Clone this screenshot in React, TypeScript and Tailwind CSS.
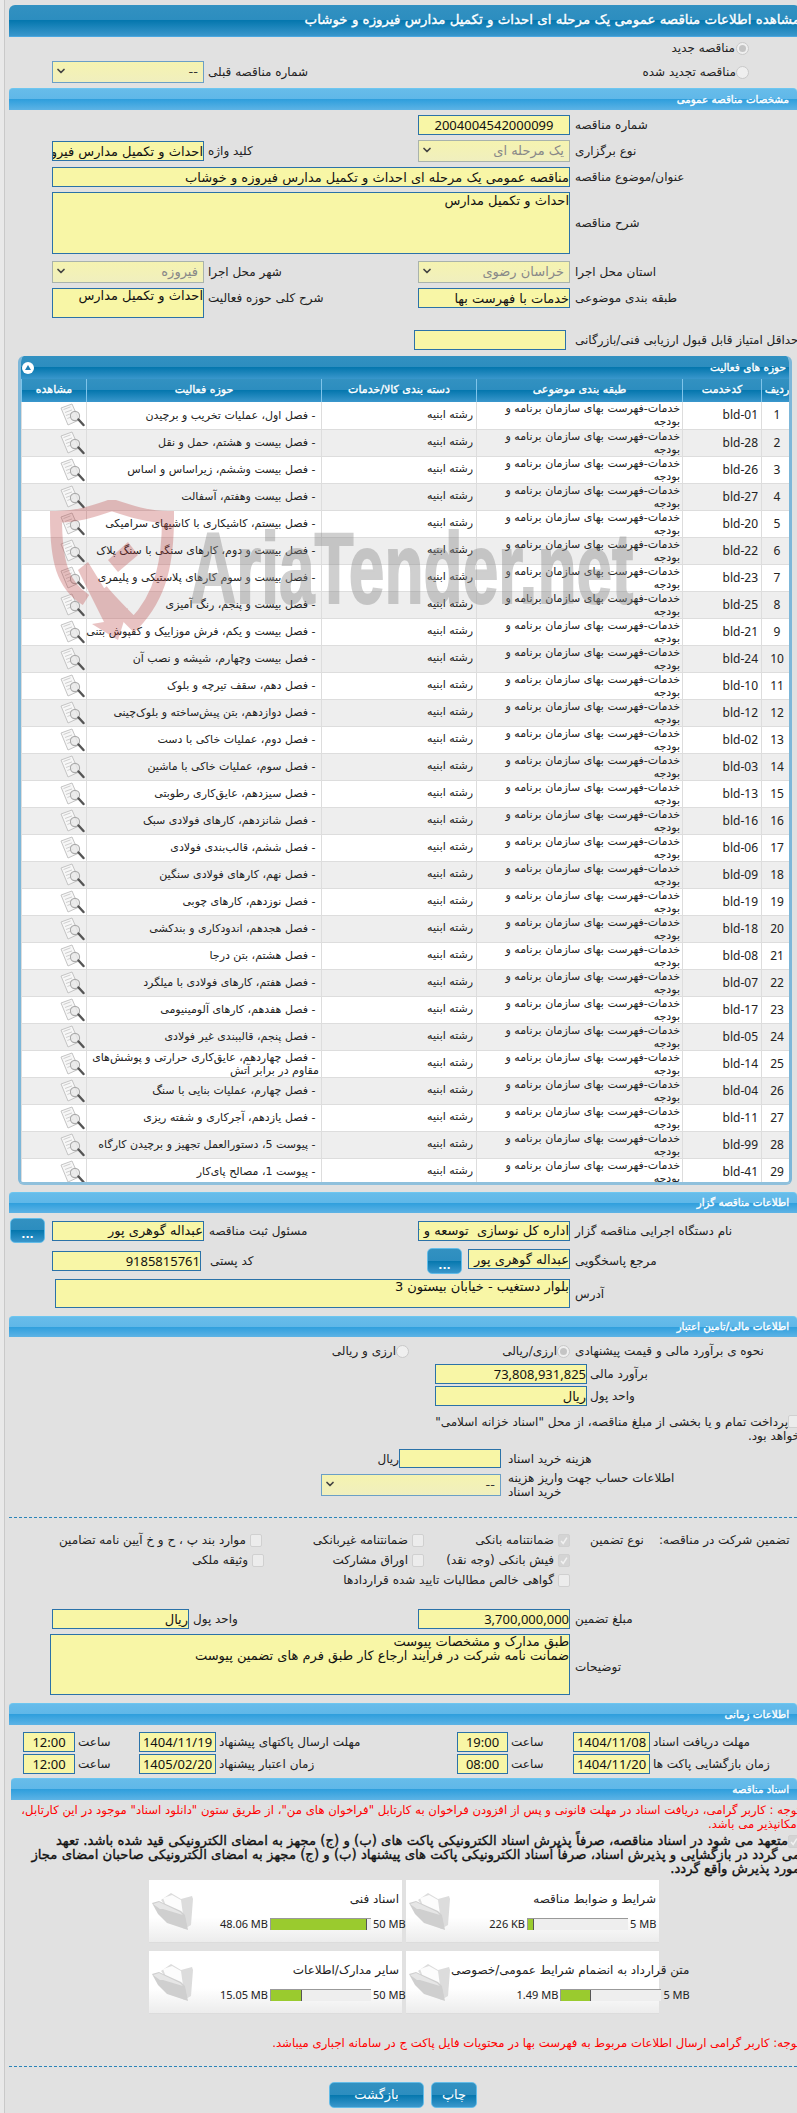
import React from 'react';
import { ChevronDown } from 'lucide-react';

const activities: [string, string][] = [
    ['bld-01', 'فصل اول، عملیات تخریب و برچیدن'],
    ['bld-28', 'فصل بیست و هشتم، حمل و نقل'],
    ['bld-26', 'فصل بیست وششم، زیراساس و اساس'],
    ['bld-27', 'فصل بیست وهفتم، آسفالت'],
    ['bld-20', 'فصل بیستم، کاشیکاری با کاشیهای سرامیکی'],
    ['bld-22', 'فصل بیست و دوم، کارهای سنگی با سنگ پلاک'],
    ['bld-23', 'فصل بیست و سوم کارهای پلاستیکی و پلیمری'],
    ['bld-25', 'فصل بیست و پنجم، رنگ آمیزی'],
    ['bld-21', 'فصل بیست و یکم، فرش موزاییک و کفپوش بتنی'],
    ['bld-24', 'فصل بیست وچهارم، شیشه و نصب آن'],
    ['bld-10', 'فصل دهم، سقف تیرچه و بلوک'],
    ['bld-12', 'فصل دوازدهم، بتن پیش‌ساخته و بلوک‌چینی'],
    ['bld-02', 'فصل دوم، عملیات خاکی با دست'],
    ['bld-03', 'فصل سوم، عملیات خاکی با ماشین'],
    ['bld-13', 'فصل سیزدهم، عایق‌کاری رطوبتی'],
    ['bld-16', 'فصل شانزدهم، کارهای فولادی سبک'],
    ['bld-06', 'فصل ششم، قالب‌بندی فولادی'],
    ['bld-09', 'فصل نهم، کارهای فولادی سنگین'],
    ['bld-19', 'فصل نوزدهم، کارهای چوبی'],
    ['bld-18', 'فصل هجدهم، اندودکاری و بندکشی'],
    ['bld-08', 'فصل هشتم، بتن درجا'],
    ['bld-07', 'فصل هفتم، کارهای فولادی با میلگرد'],
    ['bld-17', 'فصل هفدهم، کارهای آلومینیومی'],
    ['bld-05', 'فصل پنجم، قالببندی غیر فولادی'],
    ['bld-14', 'فصل چهاردهم، عایق‌کاری حرارتی و پوشش‌های مقاوم در برابر آتش'],
    ['bld-04', 'فصل چهارم، عملیات بنایی با سنگ'],
    ['bld-11', 'فصل یازدهم، آجرکاری و شفته ریزی'],
    ['bld-99', 'پیوست 5، دستورالعمل تجهیز و برچیدن کارگاه'],
    ['bld-41', 'پیوست 1، مصالح پای‌کار'],
];

const darkBar = 'bg-[linear-gradient(#3291c1_0%,#2c8dbf_50%,#0577ae_50%,#3a97cc_100%)]';
const lightBar = 'bg-[linear-gradient(#67bcea_0%,#5fb7e8_50%,#2f9fdd_50%,#5db3e5_100%)]';
const latin = "font-['Noto_Sans','DejaVu_Sans',sans-serif]";
const heavy = '[-webkit-text-stroke:0.35px_currentColor]';
const inputCls = 'block shrink-0 border border-[#2b72a8] bg-[#f8f6a6] text-[13px] text-[#111] outline-none resize-none px-0 leading-[14px] text-right';

const SectionBar = ({ title, className = '' }: { title: string; className?: string }) => (
    <div dir="rtl" className={`h-[22px] ml-[9px] rounded-t-[4px] border-t border-[#6cc6f0] ${lightBar} flex items-center pr-2 text-[10.3px] text-white ${heavy} ${className}`}>
        {title}
    </div>
);

const Label = ({ children, className = '' }: { children: React.ReactNode; className?: string }) => (
    <label dir="rtl" className={`block shrink-0 text-left text-[12px] text-[#222] whitespace-nowrap ${className}`}>{children}</label>
);

const Field = ({ value, className = '' }: { value?: string; className?: string }) => (
    <input readOnly dir="rtl" value={value ?? ''} className={`${inputCls} h-[20px] ${className}`} />
);

const Area = ({ value, className = '' }: { value: string; className?: string }) => (
    <textarea readOnly dir="rtl" value={value} className={`${inputCls} ${className}`} />
);

const Select = ({ value, muted, className = '' }: { value: string; muted?: boolean; className?: string }) => (
    <div dir="rtl" className={`relative shrink-0 h-[22px] border ${muted ? 'border-[#a9b3ac] text-[#888]' : 'border-[#6b9fc6] text-[#333]'} bg-[linear-gradient(#f5f3b0,#f0efbe)] text-[13px] flex items-center pr-[5px] ${className}`}>
        {value}
        <ChevronDown size={12} strokeWidth={3.5} className="absolute left-[2px] top-[3px] text-[#444]" />
    </div>
);

const Radio = ({ on }: { on?: boolean }) => (
    <span className="block shrink-0 w-[13px] h-[13px] rounded-full border border-[#c9c9c9] bg-[#efefef] flex items-center justify-center">
        {on && <span className="block w-[7px] h-[7px] rounded-full bg-[#c4c4c4]" />}
    </span>
);

const Check = ({ on, className = '' }: { on?: boolean; className?: string }) => (
    <span className={`block shrink-0 w-[12px] h-[13px] rounded-[2px] border border-[#d0d0d0] ${on ? 'bg-[#d4d4d4]' : 'bg-[#ececec]'} ${className}`}>
        {on && (
            <svg viewBox="0 0 12 13" className="w-full h-full">
                <path d="M2.5 7l2.5 3 4.5-7" fill="none" stroke="#f2f2f2" strokeWidth="1.8" />
            </svg>
        )}
    </span>
);

const CheckItem = ({ label, on, className = '' }: { label: string; on?: boolean; className?: string }) => (
    <div className={`shrink-0 flex items-center justify-end ${className}`}>
        <Label>{label}</Label>
        <Check on={on} className="ml-[4px]" />
    </div>
);

const DotsButton = ({ className = '' }: { className?: string }) => (
    <button className={`block shrink-0 w-[35px] rounded-[5px] border border-[#63bce8] ${darkBar} text-white text-[11px] font-bold leading-none pt-[8px] ${className}`}>...</button>
);

const ViewIcon = () => (
    <svg viewBox="0 0 25 24" className="w-[25px] h-[24px] block">
        <path d="M1 5 L12 1 L19 17 L8 22 Z" fill="#f7f7f7" stroke="#c4c4c4" />
        <path d="M3.5 6.5l7-2.6M5 9.5l7-2.6M6 12.5l7-2.6M7.3 15.5l6-2.3" stroke="#cfcfcf" fill="none" />
        <circle cx="15" cy="13" r="4.6" fill="#e9e9e9" fillOpacity="0.8" stroke="#aaaaaa" strokeWidth="1.1" />
        <path d="M18.5 16.5l5 5.5" stroke="#555" strokeWidth="2.4" strokeLinecap="round" />
    </svg>
);

const FolderIcon = () => (
    <svg viewBox="0 0 41 37" className="w-[41px] h-[37px] block">
        <path d="M9 7L19 0l10 6 11-3 1 3-2 26-7 4z" fill="#dcdcdc" />
        <path d="M11 5l9-3 9 5 3 22-14-5z" fill="#fcfcfc" />
        <path d="M0 10l7-2 22 10 4 4 3 15-21-7-9-9z" fill="#cfcfcf" />
        <path d="M1 11l6-2 21 10 3 3-20-6-3 0z" fill="#e6e6e6" />
    </svg>
);

const DocCard = ({ title, used, total, pct }: { title: string; used: string; total: string; pct: number }) => (
    <div className="w-[253px] h-[63px] bg-[linear-gradient(#fff_60%,#ececec_100%)] border-b border-[#dcdcdc] flex shrink-0">
        <div className="w-[45px] pl-[3px] pt-[13px] shrink-0"><FolderIcon /></div>
        <div className="flex-1 pr-[3px] pt-[10px] text-[12px] text-[#222]">
            <div dir="rtl" className="h-[17px] whitespace-nowrap">{title}</div>
            <div className={`flex items-center justify-end mt-[9px] gap-[2px] ${latin} text-[11px]`}>
                <span className="whitespace-nowrap">{used}</span>
                <div className="w-[101px] h-[12px] bg-[#eeeeee] border-t border-l border-[#999] shrink-0">
                    <div className="h-full bg-[#9acb2e] border-r border-[#555]" style={{ width: `${pct}%` }} />
                </div>
                <span className="w-[26px] whitespace-nowrap text-right">{total}</span>
            </div>
        </div>
    </div>
);

const Watermark = () => (
    <div className="absolute left-[50px] top-[500px] w-[600px] h-[150px] pointer-events-none">
        <svg viewBox="0 0 125 140" className="absolute left-0 top-0 w-[125px] h-[140px] opacity-30">
            <path d="M36 100C12 85 6 60 6 17 28 17 44 11 62 5 80 11 98 17 118 17 118 60 112 95 84 124 72 112 60 100 52 90" fill="none" stroke="#b93b3b" strokeWidth="12" />
            <path d="M58 60L78 42 88 55 68 72Z" fill="#b93b3b" />
            <path d="M28 70L38 62 70 114 78 108 68 140 42 124 54 122Z" fill="#b93b3b" />
        </svg>
        <span className="absolute left-[140px] top-[18px] origin-left scale-x-[0.64] font-['Liberation_Sans',sans-serif] font-bold text-[100px] leading-none whitespace-nowrap text-[#888] [-webkit-text-stroke:2px_#888] opacity-40">
            AriaTender.net
        </span>
    </div>
);

const App: React.FC = () => {
    return (
        <div className="relative w-[797px] h-[2113px] overflow-hidden bg-[#e1e1e1] font-['DejaVu_Sans',sans-serif]">
            <div className="absolute left-0 top-0 bottom-0 w-[5px] bg-[#e9e9e9] border-r border-[#c9c9c9]" />

            {/* Title */}
            <div dir="rtl" className={`mt-[5px] ml-[9px] mr-[-3px] h-[32px] rounded-t-[6px] border-b border-[#4aa7e0] ${darkBar} flex items-center text-white ${heavy} text-[13.4px] whitespace-nowrap overflow-hidden`}>
                مشاهده اطلاعات مناقصه عمومی یک مرحله ای احداث و تکمیل مدارس فیروزه و خوشاب
            </div>

            <div className="mt-[3px] h-[16px] flex items-center justify-end pr-[48px] gap-[1px]">
                <Label>مناقصه جدید</Label>
                <Radio on />
            </div>
            <div className="mt-[5px] h-[22px] flex items-center pl-[52px] pr-[48px]">
                <Select value="--" className="w-[152px]" />
                <Label className="ml-[4px]">شماره مناقصه قبلی</Label>
                <div className="flex-1" />
                <Label>مناقصه تجدید شده</Label>
                <Radio />
            </div>

            <SectionBar title="مشخصات مناقصه عمومی" className="mt-[5px]" />

            <div className="mt-[5px] flex items-center pl-[418px]">
                <Field value="2004004542000099" className={`w-[152px] !text-center ${latin}`} />
                <Label className="ml-[5px]">شماره مناقصه</Label>
            </div>
            <div className="mt-[5px] h-[22px] flex items-center pl-[52px]">
                <div className="w-[366px] shrink-0 flex items-center">
                    <Field value="احداث و تکمیل مدارس فیروزه و خوشاب" className="w-[152px]" />
                    <Label className="ml-[4px]">کلید واژه</Label>
                </div>
                <Select value="یک مرحله ای" muted className="w-[152px]" />
                <Label className="ml-[5px]">نوع برگزاری</Label>
            </div>
            <div className="mt-[5px] flex items-center pl-[52px]">
                <Field value="مناقصه عمومی یک مرحله ای احداث و تکمیل مدارس فیروزه و خوشاب" className="w-[518px]" />
                <Label className="ml-[5px]">عنوان/موضوع مناقصه</Label>
            </div>
            <div className="mt-[5px] flex items-center pl-[52px]">
                <Area value="احداث و تکمیل مدارس" className="w-[518px] h-[62px] pt-[1px]" />
                <Label className="ml-[5px]">شرح مناقصه</Label>
            </div>
            <div className="mt-[7px] h-[22px] flex items-center pl-[52px]">
                <div className="w-[366px] shrink-0 flex items-center">
                    <Select value="فیروزه" muted className="w-[152px]" />
                    <Label className="ml-[4px]">شهر محل اجرا</Label>
                </div>
                <Select value="خراسان رضوی" muted className="w-[152px]" />
                <Label className="ml-[5px]">استان محل اجرا</Label>
            </div>
            <div className="mt-[5px] h-[30px] flex items-start pl-[52px]">
                <div className="w-[366px] shrink-0 flex items-start">
                    <Area value="احداث و تکمیل مدارس" className="w-[152px] h-[30px]" />
                    <Label className="ml-[4px] mt-[1px]">شرح کلی حوزه فعالیت</Label>
                </div>
                <Field value="خدمات با فهرست بها" className="w-[152px]" />
                <Label className="ml-[5px] mt-[1px]">طبقه بندی موضوعی</Label>
            </div>
            <div className="mt-[12px] flex items-center pl-[414px]">
                <Field className="w-[152px]" />
                <Label className="ml-[9px]">حداقل امتیاز قابل قبول ارزیابی فنی/بازرگانی</Label>
            </div>

            {/* Activity table */}
            <div className="mt-[6px] ml-[18px] w-[774px] h-[829px] rounded-[6px] border-x-[3px] border-b-[3px] border-x-[#7db7d9] border-b-[#8fc0dc] overflow-hidden bg-white">
                <div dir="rtl" className={`h-[23px] ${darkBar} flex items-center justify-between pr-[3px] pl-[1px] text-white ${heavy} text-[10.5px]`}>
                    <span>حوزه های فعالیت</span>
                    <span className="w-[12px] h-[12px] rounded-full bg-white flex items-center justify-center">
                        <span className="block w-0 h-0 border-x-[3px] border-x-transparent border-b-[5px] border-b-[#1f7fb4]" />
                    </span>
                </div>
                <table dir="rtl" className="table-fixed w-[771px] border-collapse text-[11px] text-[#222]">
                    <colgroup>
                        <col className="w-[31px]" />
                        <col className="w-[79px]" />
                        <col className="w-[206px]" />
                        <col className="w-[155px]" />
                        <col className="w-[235px]" />
                        <col className="w-[65px]" />
                    </colgroup>
                    <thead>
                        <tr className={`h-[23px] ${darkBar} text-white text-[11px] ${heavy}`}>
                            {['ردیف', 'کدخدمت', 'طبقه بندی موضوعی', 'دسته بندی کالا/خدمات', 'حوزه فعالیت', 'مشاهده'].map((h) => (
                                <th key={h} className="border-x border-[#7fc4ea] p-0 font-normal whitespace-nowrap overflow-hidden">{h}</th>
                            ))}
                        </tr>
                    </thead>
                    <tbody>
                        {activities.map(([code, name], i) => (
                            <tr key={code} className={`h-[27px] ${i % 2 === 0 ? 'bg-white' : 'bg-[#eeeeee]'} border-b border-[#dddddd]`}>
                                <td className={`border-x border-[#dddddd] text-center p-0 text-[12px] ${latin}`}>{i + 1}</td>
                                <td className={`border-x border-[#dddddd] text-right pr-[3px] p-0 text-[12px] ${latin}`} dir="ltr">{code}</td>
                                <td className="border-x border-[#dddddd] pr-[2px] p-0 leading-[13px]"><div className="max-h-[26px] overflow-hidden">خدمات-فهرست بهای سازمان برنامه و بودجه</div></td>
                                <td className="border-x border-[#dddddd] pr-[3px] p-0">رشته ابنیه</td>
                                <td className="border-x border-[#dddddd] pr-[2px] p-0 leading-[13px]"><div className={`max-h-[26px] ${i === 24 ? 'tracking-[-0.1px]' : 'whitespace-nowrap'}`}>{'\u00a0- ' + name}</div></td>
                                <td className="border-x border-[#dddddd] p-0"><div className="flex justify-start pr-[1px]"><ViewIcon /></div></td>
                            </tr>
                        ))}
                    </tbody>
                </table>
            </div>

            <Watermark />

            {/* Tender organiser */}
            <SectionBar title="اطلاعات مناقصه گزار" className="mt-[7px] !h-[21px]" />
            <div className="mt-[5px] h-[25px] flex items-center pl-[10px]">
                <div className="w-[408px] shrink-0 flex items-center">
                    <DotsButton className="h-[25px]" />
                    <Field value="عبداله گوهری پور" className="w-[152px] ml-[7px]" />
                    <Label className="ml-[5px]">مسئول ثبت مناقصه</Label>
                </div>
                <Field value="اداره کل نوسازی  توسعه و تجهیز مدارس" className="w-[152px]" />
                <Label className="ml-[5px]">نام دستگاه اجرایی مناقصه گزار</Label>
            </div>
            <div className="mt-[5px] h-[26px] flex items-center pl-[52px]">
                <div className="w-[375px] shrink-0 flex items-center">
                    <Field value="9185815761" className={`w-[149px] ${latin}`} />
                    <Label className="ml-[9px]">کد پستی</Label>
                </div>
                <DotsButton className="h-[26px]" />
                <Field value="عبداله گوهری پور" className="w-[102px] ml-[6px] -mt-[4px]" />
                <Label className="ml-[5px]">مرجع پاسخگویی</Label>
            </div>
            <div className="mt-[5px] flex items-center pl-[55px]">
                <Area value="بلوار دستغیب - خیابان بیستون 3" className="w-[515px] h-[29px]" />
                <Label className="ml-[5px]">آدرس</Label>
            </div>

            {/* Finance */}
            <SectionBar title="اطلاعات مالی/تامین اعتبار" className="mt-[8px] !h-[21px]" />
            <div className="mt-[7px] h-[14px] flex items-center pl-[320px]">
                <div className="w-[89px] shrink-0 flex items-center justify-end"><Label>ارزی و ریالی</Label><Radio /></div>
                <div className="w-[161px] shrink-0 flex items-center justify-end"><Label>ارزی/ریالی</Label><Radio on /></div>
                <Label className="ml-[5px]">نحوه ی برآورد مالی و قیمت پیشنهادی</Label>
            </div>
            <div className="mt-[6px] flex items-center pl-[435px]">
                <Field value="73,808,931,825" className={`w-[152px] ${latin}`} />
                <Label className="ml-[3px]">برآورد مالی</Label>
            </div>
            <div className="mt-[2px] flex items-center pl-[435px]">
                <Field value="ریال" className="w-[152px]" />
                <Label className="ml-[3px]">واحد پول</Label>
            </div>
            <div dir="rtl" className="mt-[9px] mr-[-3px] ml-[430px] h-[29px] text-[12px] leading-[14.3px] text-[#222]">
                <span className="inline-block align-top"><Check /></span>
                پرداخت تمام و یا بخشی از مبلغ مناقصه، از محل "اسناد خزانه اسلامی" خواهد بود.
            </div>
            <div className="mt-[5px] h-[19px] flex items-center pl-[380px]">
                <Label className="w-[19px]">ریال</Label>
                <Field className="w-[102px] !h-[19px]" />
                <Label className="ml-[7px]">هزینه خرید اسناد</Label>
            </div>
            <div className="mt-[6px] h-[22px] flex items-center pl-[321px]">
                <Select value="--" className="w-[180px]" />
                <Label className="ml-[7px] !whitespace-normal w-[175px] leading-[14.3px]">اطلاعات حساب جهت واریز هزینه خرید اسناد</Label>
            </div>
            <div className="mt-[21px] ml-[9px] border-t border-dashed border-[#2b84b8]" />

            {/* Guarantee */}
            <div className="mt-[15px] h-[14px] flex items-center">
                <CheckItem label="موارد بند پ ، ح و خ آیین نامه تضامین" className="w-[262px]" />
                <CheckItem label="ضمانتنامه غیربانکی" className="w-[162px]" />
                <CheckItem label="ضمانتنامه بانکی" on className="w-[146px]" />
                <Label className="ml-[20px] w-[69px]">نوع تضمین</Label>
                <Label>تضمین شرکت در مناقصه:</Label>
            </div>
            <div className="mt-[6px] h-[14px] flex items-center">
                <CheckItem label="وثیقه ملکی" className="w-[264px]" />
                <CheckItem label="اوراق مشارکت" className="w-[160px]" />
                <CheckItem label="فیش بانکی (وجه نقد)" on className="w-[146px]" />
            </div>
            <div className="mt-[6px] h-[14px] flex items-center">
                <CheckItem label="گواهی خالص مطالبات تایید شده قراردادها" className="w-[570px]" />
            </div>
            <div className="mt-[22px] flex items-center pl-[52px]">
                <div className="w-[366px] shrink-0 flex items-center">
                    <Field value="ریال" className="w-[137px]" />
                    <Label className="ml-[4px]">واحد پول</Label>
                </div>
                <Field value="3,700,000,000" className={`w-[152px] ${latin}`} />
                <Label className="ml-[5px]">مبلغ تضمین</Label>
            </div>
            <div className="mt-[5px] flex items-center pl-[50px]">
                <Area value={'طبق مدارک و مشخصات پیوست\nضمانت نامه شرکت در فرایند ارجاع کار طبق فرم های تضمین پیوست'} className="w-[520px] h-[61px]" />
                <Label className="ml-[5px] mt-[5px]">توضیحات</Label>
            </div>

            {/* Dates */}
            <SectionBar title="اطلاعات زمانی" className="mt-[8px]" />
            <div className="mt-[7px] flex items-center pl-[23px]">
                <Field value="12:00" className={`w-[52px] !text-center ${latin}`} />
                <Label className="pl-[3px] w-[64px]">ساعت</Label>
                <Field value="1404/11/19" className={`w-[77px] !text-center ${latin}`} />
                <Label className="pl-[3px] w-[241px]">مهلت ارسال پاکتهای پیشنهاد</Label>
                <Field value="19:00" className={`w-[51px] !text-center ${latin}`} />
                <Label className="pl-[3px] w-[65px]">ساعت</Label>
                <Field value="1404/11/08" className={`w-[77px] !text-center ${latin}`} />
                <Label className="pl-[3px]">مهلت دریافت اسناد</Label>
            </div>
            <div className="mt-[2px] flex items-center pl-[23px]">
                <Field value="12:00" className={`w-[52px] !text-center ${latin}`} />
                <Label className="pl-[3px] w-[64px]">ساعت</Label>
                <Field value="1405/02/20" className={`w-[77px] !text-center ${latin}`} />
                <Label className="pl-[3px] w-[241px]">زمان اعتبار پیشنهاد</Label>
                <Field value="08:00" className={`w-[51px] !text-center ${latin}`} />
                <Label className="pl-[3px] w-[65px]">ساعت</Label>
                <Field value="1404/11/20" className={`w-[77px] !text-center ${latin}`} />
                <Label className="pl-[3px]">زمان بازگشایی پاکت ها</Label>
            </div>

            {/* Documents */}
            <SectionBar title="اسناد مناقصه" className="mt-[4px] !ml-[11px]" />
            <div dir="rtl" className="mt-[3px] mr-[-3px] h-[29px] text-[11.7px] leading-[14.3px] text-[#f00] whitespace-nowrap">
                توجه : کاربر گرامی، دریافت اسناد در مهلت قانونی و پس از افزودن فراخوان به کارتابل "فراخوان های من"، از طریق ستون "دانلود اسناد" موجود در این کارتابل،
                <br />
                امکانپذیر می باشد.
            </div>
            <div dir="rtl" className={`mt-[2px] mr-[-3px] h-[42px] text-[13.25px] ${heavy} leading-[14px] text-[#111] whitespace-nowrap`}>
                <span className="inline-block align-top mt-[1px]"><Check on /></span>
                متعهد می شود در اسناد مناقصه، صرفاً پذیرش اسناد الکترونیکی پاکت های (ب) و (ج) مجهز به امضای الکترونیکی قید شده باشد. تعهد
                <br />
                می گردد در بازگشایی و پذیرش اسناد، صرفاً اسناد الکترونیکی پاکت های پیشنهاد (ب) و (ج) مجهز به امضای الکترونیکی صاحبان امضای مجاز
                <br />
                مورد پذیرش واقع گردد.
            </div>
            <div className="mt-[4px] ml-[149px] flex gap-[4px]">
                <DocCard title="اسناد فنی" used="48.06 MB" total="50 MB" pct={96} />
                <DocCard title="شرایط و ضوابط مناقصه" used="226 KB" total="5 MB" pct={6} />
            </div>
            <div className="mt-[8px] ml-[149px] flex gap-[4px]">
                <DocCard title="سایر مدارک/اطلاعات" used="15.05 MB" total="50 MB" pct={31} />
                <DocCard title="متن قرارداد به انضمام شرایط عمومی/خصوصی" used="1.49 MB" total="5 MB" pct={30} />
            </div>
            <div dir="rtl" className="mt-[22px] mr-[-3px] h-[14px] text-[11.7px] leading-[14.3px] text-[#f00] whitespace-nowrap">
                توجه: کاربر گرامی ارسال اطلاعات مربوط به فهرست بها در محتویات فایل پاکت ج در سامانه اجباری میباشد.
            </div>
            <div className="mt-[16px] ml-[9px] border-t border-dashed border-[#2b84b8]" />
            <div className="mt-[15px] flex pl-[329px] gap-[7px]">
                <button className={`w-[95px] h-[26px] rounded-[5px] border border-[#63bce8] ${darkBar} text-white text-[13px]`}>بازگشت</button>
                <button className={`w-[46px] h-[26px] rounded-[5px] border border-[#63bce8] ${darkBar} text-white text-[13px]`}>چاپ</button>
            </div>
        </div>
    );
};

export default App;
